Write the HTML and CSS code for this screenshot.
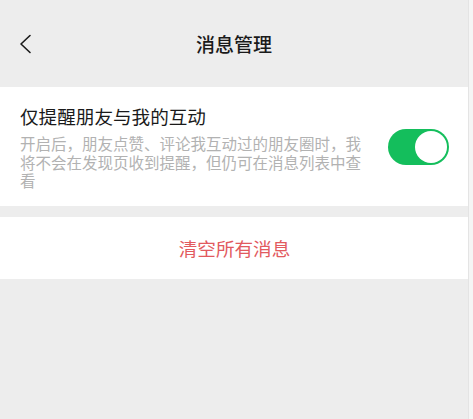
FILE: index.html
```html
<!DOCTYPE html>
<html lang="zh-CN">
<head>
<meta charset="utf-8">
<title>消息管理</title>
<link rel="stylesheet" href="styles.css">
</head>
<body>
<div class="page">
  <header class="navbar">
    <span class="back">
      <svg width="14" height="20" viewBox="0 0 14 20"><path d="M12 1.5 L3 10 L12 18.5" fill="none" stroke="#1a1a1a" stroke-width="1.6" stroke-linecap="round" stroke-linejoin="round"/></svg>
    </span>
    <h1 class="title">消息管理</h1>
  </header>
  <section class="card setting">
    <div class="setting-text">
      <div class="setting-title">仅提醒朋友与我的互动</div>
      <div class="setting-desc">开启后，朋友点赞、评论我互动过的朋友圈时，我将不会在发现页收到提醒，但仍可在消息列表中查看</div>
    </div>
    <div class="switch"><span class="knob"></span></div>
  </section>
  <section class="card action">
    <span class="danger">清空所有消息</span>
  </section>
</div>
</body>
</html>
```
FILE: styles.css
```css
html, body {
  margin: 0;
  padding: 0;
}
body {
  background: #f5f5f5;
  font-family: "Noto Sans CJK SC", "Noto Sans", sans-serif;
  width: 473px;
  height: 419px;
  overflow: hidden;
}
.page {
  width: 468px;
  height: 419px;
  background: #ededed;
  border-right: 1px solid #e4e4e4;
}
.navbar {
  height: 87px;
  display: flex;
  align-items: center;
  justify-content: center;
  position: relative;
}
.back {
  position: absolute;
  left: 18px;
  top: 34px;
  width: 14px;
  height: 20px;
}
.back svg { display: block; }
.title {
  margin: 0;
  font-size: 19px;
  font-weight: 500;
  color: #1a1a1a;
  line-height: 22px;
  padding-left: 0;
}
.card {
  background: #fff;
}
.setting {
  display: flex;
  align-items: center;
  justify-content: space-between;
  padding: 18px 19px 16px 20px;
  height: 85px;
}
.setting-text {
  width: 350px;
}
.setting-title {
  font-size: 18.6px;
  line-height: 22px;
  color: #1a1a1a;
}
.setting-desc {
  margin-top: 7px;
  font-size: 15.5px;
  line-height: 18.5px;
  color: #b2b2b2;
}
.switch {
  width: 61px;
  height: 36px;
  border-radius: 18px;
  background: #14be5c;
  position: relative;
  margin-top: -1px;
}
.knob {
  position: absolute;
  right: 2px;
  top: 2px;
  width: 32px;
  height: 32px;
  border-radius: 50%;
  background: #fff;
}
.action {
  margin-top: 11px;
  height: 62px;
  display: flex;
  align-items: center;
  justify-content: center;
}
.danger {
  font-size: 18.6px;
  line-height: 22px;
  color: #e25a5e;
  padding-left: 1px;
}
```
